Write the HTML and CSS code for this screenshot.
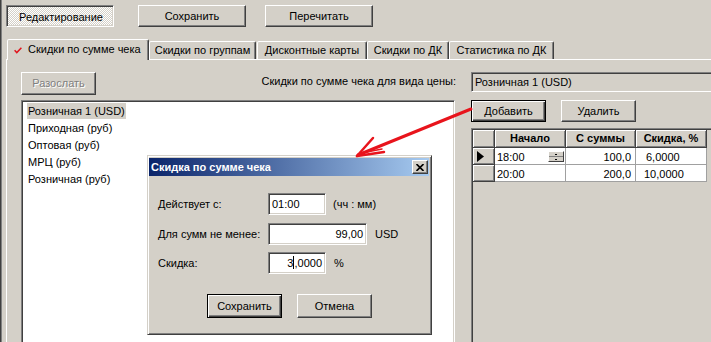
FILE: index.html
```html
<!DOCTYPE html>
<html>
<head>
<meta charset="utf-8">
<link rel="stylesheet" href="styles.css">
</head>
<body>
<div class="win">
  <div class="toolbar">
    <div class="btn checked tb-edit"><span>Редактирование</span></div>
    <div class="btn tb-save">Сохранить</div>
    <div class="btn tb-reload">Перечитать</div>
  </div>
  <div class="tabs">
    <div class="tab active t1"><svg class="check" width="8" height="7" viewBox="0 0 8 7"><path d="M0.6 3.2 L2.8 5.6 L7.4 0.8" fill="none" stroke="#e0161e" stroke-width="1.5"/></svg>Скидки по сумме чека</div>
    <div class="tab t2">Скидки по группам</div>
    <div class="tab t3">Дисконтные карты</div>
    <div class="tab t4">Скидки по ДК</div>
    <div class="tab t5">Статистика по ДК</div>
  </div>
  <div class="page">
    <div class="col-left">
      <div class="top-row">
        <div class="btn disabled send">Разослать</div>
        <div class="caption">Скидки по сумме чека для вида цены:</div>
      </div>
      <div class="listbox">
        <div class="item selected"><span>Розничная 1 (USD)</span></div>
        <div class="item"><span>Приходная (руб)</span></div>
        <div class="item"><span>Оптовая (руб)</span></div>
        <div class="item"><span>МРЦ (руб)</span></div>
        <div class="item"><span>Розничная (руб)</span></div>
      </div>
    </div>
    <div class="col-right">
      <div class="field">Розничная 1 (USD)</div>
      <div class="actions">
        <div class="btn default act">Добавить</div>
        <div class="btn act">Удалить</div>
      </div>
      <div class="grid">
        <div class="cells">
          <div class="hd"></div>
          <div class="hd">Начало</div>
          <div class="hd">С суммы</div>
          <div class="hd">Скидка, %</div>

          <div class="ind"><svg width="7" height="11" viewBox="0 0 7 11"><path d="M0 0 L7 5.5 L0 11 Z" fill="#000"/></svg></div>
          <div class="cell time">18:00<span class="spin"><i></i><i></i></span></div>
          <div class="cell num">100,0</div>
          <div class="cell pct first">6,0000</div>

          <div class="ind"></div>
          <div class="cell time">20:00</div>
          <div class="cell num">200,0</div>
          <div class="cell pct">10,0000</div>
        </div>
      </div>
    </div>
  </div>

  <div class="dialog">
    <div class="titlebar">
      <span class="title">Скидка по сумме чека</span>
      <span class="close"><svg width="8" height="7" viewBox="0 0 8 7"><path d="M0.5 0 L7.5 7 M7.5 0 L0.5 7" stroke="#000" stroke-width="1.6"/></svg></span>
    </div>
    <div class="form">
      <div class="frow r1">
        <span class="flabel">Действует с:</span>
        <span class="input w58">01:00</span>
        <span class="suffix">(чч : мм)</span>
      </div>
      <div class="frow r2">
        <span class="flabel">Для сумм не менее:</span>
        <span class="input w99 right">99,00</span>
        <span class="suffix s8">USD</span>
      </div>
      <div class="frow r3">
        <span class="flabel">Скидка:</span>
        <span class="input w58 right">3<span class="caret"></span>,0000</span>
        <span class="suffix s8">%</span>
      </div>
    </div>
    <div class="dbuttons">
      <div class="btn default dbtn">Сохранить</div>
      <div class="btn dbtn">Отмена</div>
    </div>
  </div>

  <svg class="arrow" width="711" height="342" viewBox="0 0 711 342">
    <g stroke="#e8141c" fill="none" stroke-linecap="round">
      <path d="M471 109 L358 155" stroke-width="3"/>
      <path d="M357 156 L373 138" stroke-width="2.5"/>
      <path d="M357 156 L384 152" stroke-width="2.5"/>
      <path d="M362 153 L382 149" stroke-width="1.5"/>
    </g>
  </svg>
</div>
</body>
</html>
```

FILE: styles.css
```css
* { box-sizing: border-box; margin: 0; padding: 0; }
html, body { margin: 0; background: #d4d0c8; }
body { font: 11px "Liberation Sans", Arial, sans-serif; color: #000; }

.win {
  position: relative;
  width: 711px;
  height: 342px;
  overflow: hidden;
  background: #d4d0c8;
  padding-left: 2px;
  box-shadow: inset 1px 0 #404040, inset 2px 0 #808080;
}

/* generic classic button */
.btn {
  display: flex;
  align-items: center;
  justify-content: center;
  background: #d4d0c8;
  border: 1px solid;
  border-color: #fff #404040 #404040 #fff;
  box-shadow: inset -1px -1px #808080;
  height: 22px;
  white-space: nowrap;
  line-height: 13px;
}
.btn.default {
  border-color: #000;
  box-shadow: inset 1px 1px #fff, inset -1px -1px #404040, inset -2px -2px #808080;
}
.btn.checked {
  border-color: #808080 #fff #fff #808080;
  box-shadow: inset 1px 1px #404040, inset -1px -1px #d4d0c8;
  background: repeating-conic-gradient(#fff 0 25%, #d4d0c8 0 50%) 0 0 / 2px 2px;
  padding: 2px 0 0 2px;
}
.btn.disabled {
  color: #808080;
  text-shadow: 1px 1px #fff;
}

/* toolbar */
.toolbar {
  display: flex;
  padding: 5px 0 0 4px;
  height: 27px;
}
.tb-edit { width: 108px; }
.tb-save { width: 108px; margin-left: 24px; }
.tb-reload { width: 108px; margin-left: 19px; }

/* tabs */
.tabs {
  display: flex;
  align-items: flex-end;
  margin-top: 12px;
  padding-left: 5px;
  height: 20px;
}
.tab {
  height: 18px;
  border: 1px solid;
  border-bottom: none;
  border-color: #fff #404040 transparent #fff;
  box-shadow: inset -1px 0 #808080;
  border-radius: 2px 2px 0 0;
  display: flex;
  align-items: center;
  justify-content: center;
  white-space: nowrap;
  background: #d4d0c8;
  line-height: 13px;
}
.tab.active {
  position: relative;
  z-index: 2;
  height: 21px;
  margin-bottom: -1px;
  align-items: flex-start;
  justify-content: flex-start;
  padding: 3px 0 0 6px;
}
.check { margin: 4px 6px 0 0; flex: none; }
.t1 { width: 142px; }
.t2 { width: 107px; }
.t3 { width: 110px; margin-left: 1px; }
.t4 { width: 82px; }
.t5 { width: 105px; }

/* page */
.page {
  margin-left: 4px;
  width: 740px;
  height: 300px;
  border-top: 1px solid #fff;
  border-left: 1px solid #fff;
  padding: 12px 0 0 14px;
  display: grid;
  grid-template-columns: 434px 260px;
  column-gap: 16px;
  align-items: start;
}

.top-row {
  display: flex;
  justify-content: space-between;
  align-items: flex-start;
  height: 23px;
}
.send { width: 75px; height: 23px; }
.caption { margin-top: 3px; margin-right: -1px; line-height: 13px; white-space: nowrap; }

.listbox, .field, .grid, .input {
  border: 1px solid;
  border-color: #808080 #fff #fff #808080;
  box-shadow: inset 1px 1px #404040, inset -1px -1px #d4d0c8;
}
.listbox {
  margin-top: 5px;
  height: 260px;
  background: #fff;
  padding: 2px 0 0 5px;
}
.item {
  height: 17px;
  line-height: 16px;
}
.item span { display: inline-block; padding: 0 1px; height: 16px; }
.item.selected span { background: #d4d0c8; }

.field {
  height: 20px;
  background: #d4d0c8;
  padding: 0 0 0 3px;
  line-height: 18px;
  white-space: nowrap;
}
.actions {
  display: flex;
  gap: 15px;
  margin-top: 8px;
}
.act { width: 75px; }
.grid {
  margin-top: 6px;
  height: 220px;
  background: #d4d0c8;
  padding: 1px 0 0 1px;
}
.cells {
  display: grid;
  grid-template-columns: 22px 71px 70px 71px;
  grid-template-rows: 18px 17px 17px;
}
.hd, .ind {
  background: #d4d0c8;
  border-right: 1px solid #404040;
  border-bottom: 1px solid #404040;
  box-shadow: inset 1px 1px #fff, inset -1px -1px #808080;
  font-weight: bold;
  text-align: center;
  line-height: 16px;
}
.ind { display: flex; align-items: center; padding-left: 4px; }
.cell {
  background: #fff;
  border-right: 1px solid #a0a0a0;
  border-bottom: 1px solid #a0a0a0;
  line-height: 16px;
  padding: 1px 3px 0 2px;
  white-space: nowrap;
}
.time { display: flex; justify-content: space-between; align-items: center; }
.num { text-align: right; padding-right: 4px; }
.pct { padding-left: 8px; }
.pct.first { padding-left: 10px; }
.spin {
  width: 16px;
  height: 11px;
  margin-right: -2px;
  display: flex;
  flex-direction: column;
  border: 1px solid;
  border-color: #fff #404040 #404040 #fff;
  background: #d4d0c8;
}
.spin i {
  flex: 1;
  display: flex;
  align-items: center;
  justify-content: center;
}
.spin i + i { border-top: 1px solid #808080; }
.spin i::after { content: ""; width: 2px; height: 1px; background: #000; }

/* dialog */
.dialog {
  position: absolute;
  left: 147px;
  top: 155px;
  width: 285px;
  height: 180px;
  background: #d4d0c8;
  border: 1px solid;
  border-color: #d4d0c8 #404040 #404040 #d4d0c8;
  box-shadow: inset 1px 1px #fff, inset -1px -1px #808080;
  padding: 2px;
  z-index: 5;
}
.titlebar {
  height: 18px;
  margin-left: -1px;
  background: linear-gradient(to right, #0a246a, #a6caf0);
  color: #fff;
  font-weight: bold;
  display: flex;
  align-items: center;
  justify-content: space-between;
  padding-left: 2px;
}
.title { white-space: nowrap; }
.close {
  width: 16px;
  height: 14px;
  margin-right: 1px;
  background: #d4d0c8;
  border: 1px solid;
  border-color: #fff #404040 #404040 #fff;
  box-shadow: inset -1px -1px #808080;
  display: flex;
  align-items: center;
  justify-content: center;
}
.form { padding: 17px 0 0 8px; }
.frow { display: flex; align-items: center; height: 22px; }
.r2 { margin-top: 8px; }
.r3 { margin-top: 7px; }
.flabel { width: 110px; white-space: nowrap; }
.input {
  height: 22px;
  background: #fff;
  padding: 1px 3px 0 3px;
  line-height: 18px;
  white-space: nowrap;
}
.input.right { text-align: right; }
.w58 { width: 58px; }
.w99 { width: 99px; }
.suffix { margin-left: 7px; }
.suffix.s8 { margin-left: 8px; }
.caret {
  display: inline-block;
  width: 1px;
  height: 13px;
  background: #000;
  vertical-align: -2px;
}
.dbuttons {
  display: flex;
  justify-content: center;
  gap: 15px;
  margin-top: 20px;
}
.dbtn { width: 75px; height: 24px; }

.arrow {
  position: absolute;
  left: 0;
  top: 0;
  pointer-events: none;
  z-index: 10;
}
```
